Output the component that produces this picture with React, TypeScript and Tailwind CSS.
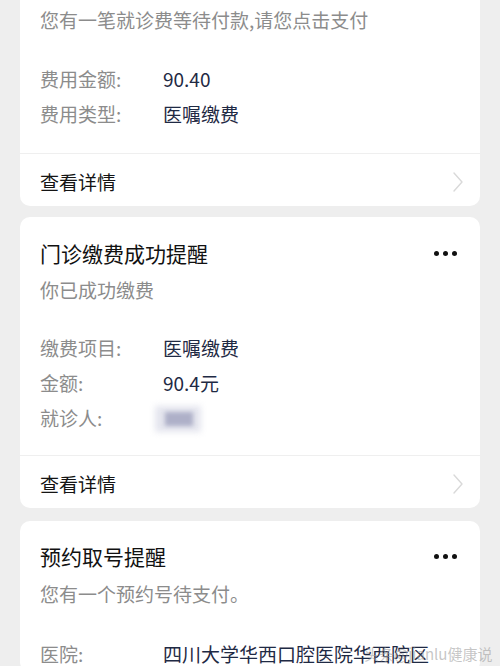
import React from 'react';

const font = { fontFamily: '"Noto Sans CJK SC", "Noto Sans", sans-serif' };

type Row = { label: string; value?: string; blurred?: boolean };

const Dots: React.FC = () => (
  <div className="flex items-center gap-[4px] pr-[3px]">
    <span className="block w-[5px] h-[5px] rounded-full bg-[#111111]" />
    <span className="block w-[5px] h-[5px] rounded-full bg-[#111111]" />
    <span className="block w-[5px] h-[5px] rounded-full bg-[#111111]" />
  </div>
);

const Chevron: React.FC = () => (
  <svg width="12" height="20" viewBox="0 0 12 20" fill="none" className="mr-[16px]">
    <polyline points="2,1 10,10 2,19" stroke="#d9d9d9" strokeWidth="1.4" strokeLinecap="round" strokeLinejoin="round" />
  </svg>
);

const InfoRows: React.FC<{ rows: Row[] }> = ({ rows }) => (
  <div className="flex flex-col">
    {rows.map((r) => (
      <div key={r.label} className="flex items-center h-[35px] text-[19px]">
        <span className="w-[123px] shrink-0 text-[#8c8c8c]">{r.label}</span>
        {r.blurred ? (
          <div className="relative w-[56px] h-[32px] -ml-[10px]">
            <div className="absolute left-[2px] top-[3px] w-[46px] h-[26px] bg-[#e4e5ee] blur-[3px]" />
            <div className="absolute left-[12px] top-[9px] w-[28px] h-[14px] bg-[#aeb0c8] blur-[2px]" />
          </div>
        ) : (
          <span className="text-[#1f2a44]">{r.value}</span>
        )}
      </div>
    ))}
  </div>
);

const Footer: React.FC = () => (
  <div className="border-t border-[#efefef] flex items-center justify-between h-[53px] pt-[4px] pl-[20px]">
    <span className="text-[19px] text-[#141414] leading-[30px]">查看详情</span>
    <Chevron />
  </div>
);

const App: React.FC = () => {
  return (
    <div className="relative w-[500px] h-[666px] overflow-hidden bg-[#eeeeee]" style={font}>
      <div className="flex flex-col px-[20px]">
        {/* card 1, title scrolled off */}
        <div className="bg-white rounded-b-[10px]">
          <div className="px-[20px] pt-[5px] pb-[21px]">
            <p className="text-[19px] leading-[30px] text-[#8c8c8c]">您有一笔就诊费等待付款,请您点击支付</p>
            <div className="mt-[27px]">
              <InfoRows
                rows={[
                  { label: '费用金额:', value: '90.40' },
                  { label: '费用类型:', value: '医嘱缴费' },
                ]}
              />
            </div>
          </div>
          <Footer />
        </div>

        {/* card 2 */}
        <div className="bg-white rounded-[10px] mt-[11px]">
          <div className="px-[20px] pt-[21px] pb-[19px]">
            <div className="flex items-center justify-between">
              <h2 className="text-[21px] leading-[30px] text-[#111111]">门诊缴费成功提醒</h2>
              <Dots />
            </div>
            <p className="mt-[7px] text-[19px] leading-[30px] text-[#8c8c8c]">你已成功缴费</p>
            <div className="mt-[26px]">
              <InfoRows
                rows={[
                  { label: '缴费项目:', value: '医嘱缴费' },
                  { label: '金额:', value: '90.4元' },
                  { label: '就诊人:', blurred: true },
                ]}
              />
            </div>
          </div>
          <Footer />
        </div>

        {/* card 3 */}
        <div className="bg-white rounded-[10px] mt-[13px]">
          <div className="px-[20px] pt-[20px]">
            <div className="flex items-center justify-between">
              <h2 className="text-[21px] leading-[30px] text-[#111111]">预约取号提醒</h2>
              <Dots />
            </div>
            <p className="mt-[8px] text-[19px] leading-[30px] text-[#8c8c8c]">您有一个预约号待支付。</p>
            <div className="mt-[28px]">
              <InfoRows rows={[{ label: '医院:', value: '四川大学华西口腔医院华西院区' }]} />
            </div>
          </div>
        </div>
      </div>

      {/* watermark */}
      <span className="absolute left-[364px] top-[643px] text-[15px] leading-[22px] text-[#a0a0a0]/60 whitespace-nowrap">
        头条@jianlu健康说
      </span>
    </div>
  );
};

export default App;
